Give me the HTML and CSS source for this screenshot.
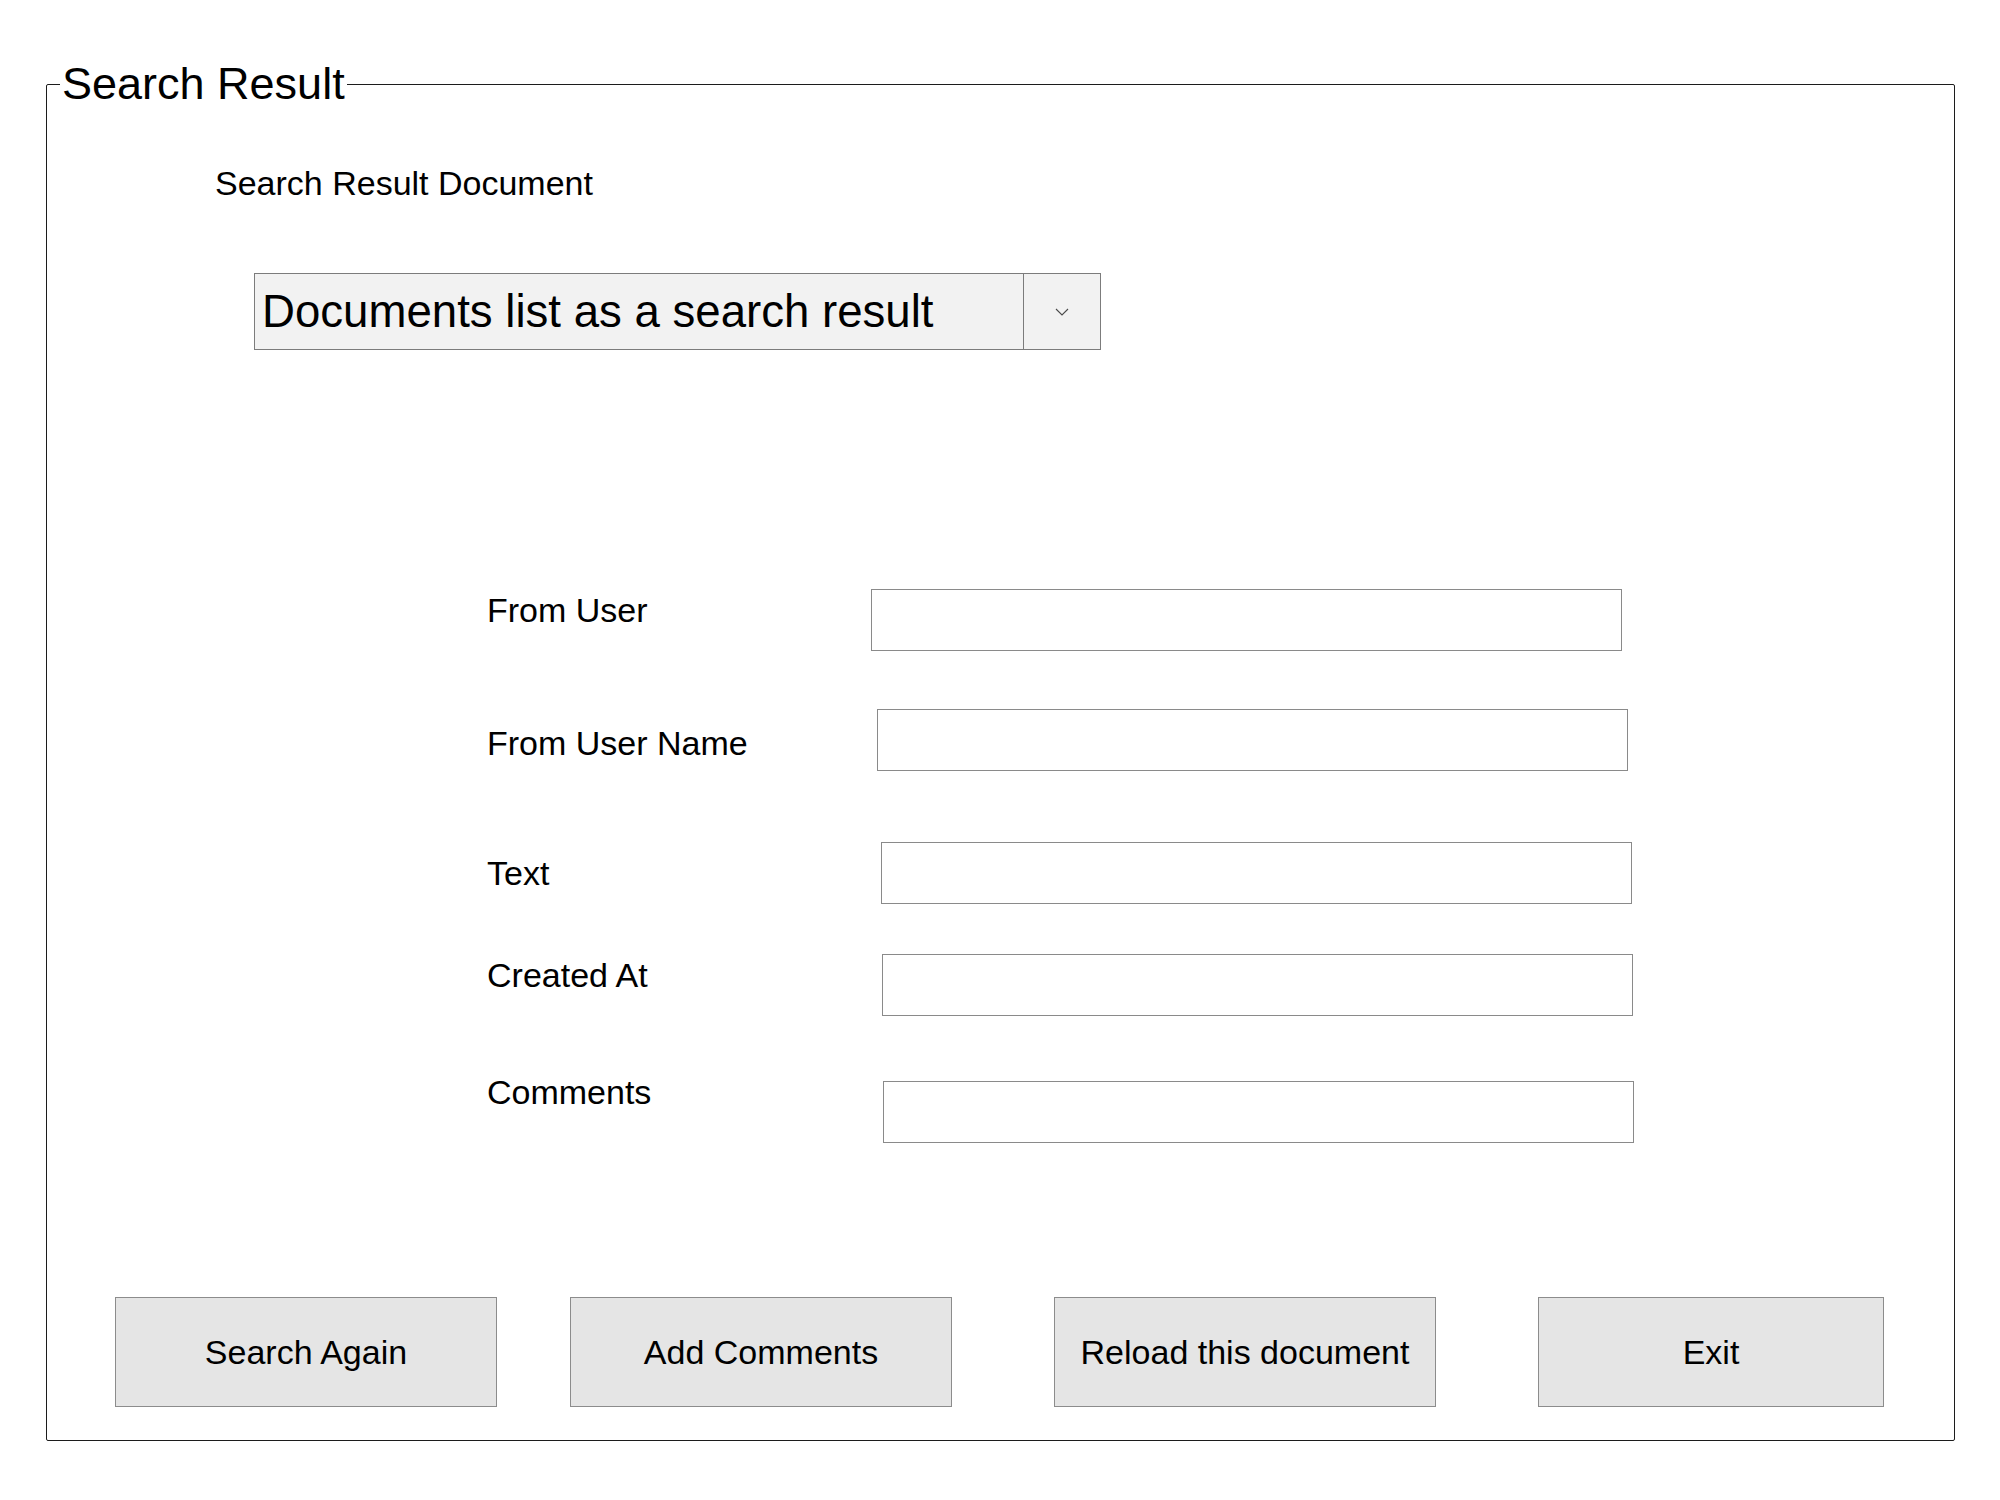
FILE: index.html
```html
<!DOCTYPE html>
<html lang="en">
<head>
<meta charset="utf-8">
<title>Search Result</title>
<link rel="stylesheet" href="styles.css">
</head>
<body>
<fieldset class="panel">
  <legend class="panel-title">Search Result</legend>

  <div class="doc-label">Search Result Document</div>

  <div class="combo">
    <div class="combo-value">Documents list as a search result</div>
    <div class="combo-arrow">
      <svg width="14" height="8" viewBox="0 0 14 8" aria-hidden="true">
        <polyline points="1,1 7,7 13,1" fill="none" stroke="#4a4a4a" stroke-width="1.1"/>
      </svg>
    </div>
  </div>

  <div class="form">
    <div class="row row-1">
      <label class="field-label">From User</label>
      <div class="field-input"></div>
    </div>
    <div class="row row-2">
      <label class="field-label">From User Name</label>
      <div class="field-input"></div>
    </div>
    <div class="row row-3">
      <label class="field-label">Text</label>
      <div class="field-input"></div>
    </div>
    <div class="row row-4">
      <label class="field-label">Created At</label>
      <div class="field-input"></div>
    </div>
    <div class="row row-5">
      <label class="field-label">Comments</label>
      <div class="field-input"></div>
    </div>
  </div>

  <div class="actions">
    <div class="btn btn-search">Search Again</div>
    <div class="btn btn-add">Add Comments</div>
    <div class="btn btn-reload">Reload this document</div>
    <div class="btn btn-exit">Exit</div>
  </div>
</fieldset>
</body>
</html>
```

FILE: styles.css
```css
html, body {
  margin: 0;
  padding: 0;
  background: #ffffff;
}

body {
  font-family: "Liberation Sans", Arial, sans-serif;
  color: #000000;
}

.panel {
  margin: 58px 45px 0 46px;
  padding: 0 0 33px 0;
  border: 1px solid #1c1c1c;
  border-radius: 2px;
  min-width: 0;
}

.panel-title {
  font-size: 45px;
  line-height: 52px;
  padding: 0 2px;
  margin-left: 13px;
}

.doc-label {
  font-size: 34px;
  line-height: 40px;
  margin: 53px 0 0 168px;
}

.combo {
  display: flex;
  width: 847px;
  height: 77px;
  box-sizing: border-box;
  margin: 70px 0 0 207px;
  background: #f2f2f2;
  border: 1px solid #7c7c7c;
}

.combo-value {
  flex: 1;
  display: flex;
  align-items: center;
  padding-left: 7px;
  font-size: 45.6px;
  white-space: nowrap;
}

.combo-arrow {
  width: 77px;
  box-sizing: border-box;
  border-left: 1px solid #7c7c7c;
  display: flex;
  align-items: center;
  justify-content: center;
}

.form {
  margin-top: 239px;
  padding-left: 440px;
}

.row {
  display: flex;
  align-items: flex-start;
}

.field-label {
  width: 384px;
  flex: none;
  font-size: 34px;
  line-height: 40px;
}

.field-input {
  width: 751px;
  height: 62px;
  box-sizing: border-box;
  border: 1px solid #8a8a8a;
  background: #ffffff;
}

.row-1 .field-label { margin-top: 1px; }
.row-2 { margin-top: 58px; }
.row-2 .field-label { margin-top: 14px; }
.row-2 .field-input { margin-left: 6px; }
.row-3 { margin-top: 71px; }
.row-3 .field-label { margin-top: 11px; }
.row-3 .field-input { margin-left: 10px; }
.row-4 { margin-top: 50px; }
.row-4 .field-label { margin-top: 1px; }
.row-4 .field-input { margin-left: 11px; }
.row-5 { margin-top: 65px; }
.row-5 .field-label { margin-top: -9px; }
.row-5 .field-input { margin-left: 12px; }

.actions {
  display: flex;
  margin: 154px 0 0 68px;
}

.btn {
  height: 110px;
  box-sizing: border-box;
  border: 1px solid #8c8c8c;
  background: #e5e5e5;
  display: flex;
  align-items: center;
  justify-content: center;
  font-size: 34px;
  white-space: nowrap;
}

.btn-search { width: 382px; }
.btn-add { width: 382px; margin-left: 73px; }
.btn-reload { width: 382px; margin-left: 102px; }
.btn-exit { width: 346px; margin-left: 102px; }
```
